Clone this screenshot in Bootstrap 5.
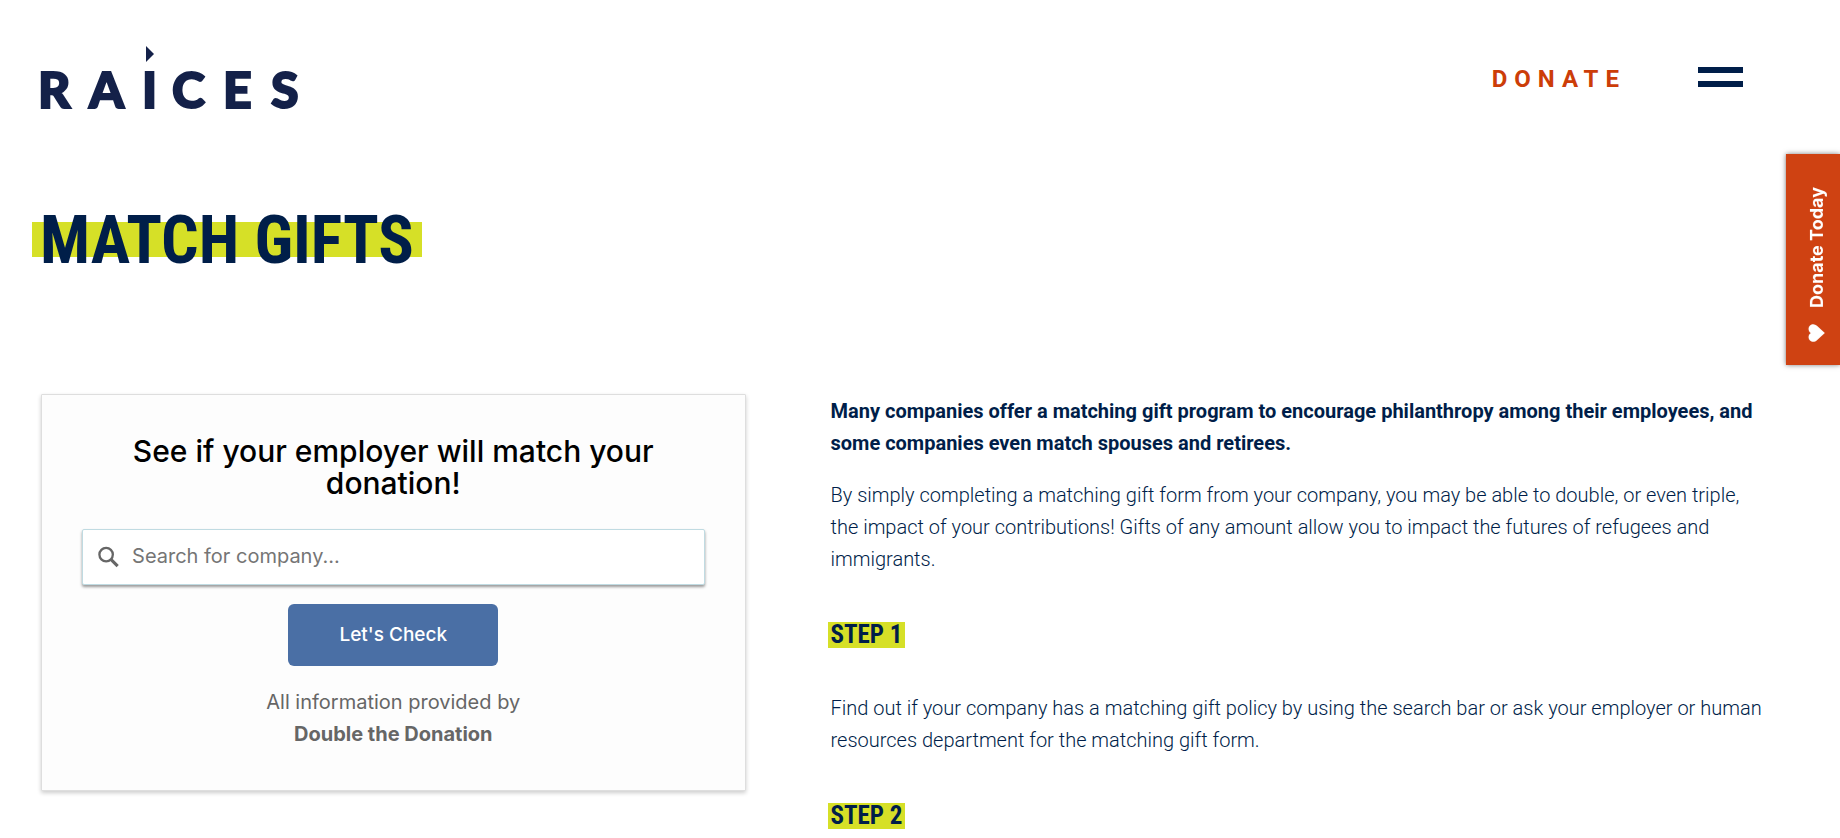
<!DOCTYPE html>
<html lang="en">
<head>
<meta charset="utf-8">
<meta name="viewport" content="width=device-width, initial-scale=1">
<title>Match Gifts | RAICES</title>
<link rel="stylesheet" href="https://cdn.jsdelivr.net/npm/bootstrap@5.3.0/dist/css/bootstrap.min.css">
<style>
  :root { --navy: #001e49; --orange: #cf4212; --lime: #d6e027; --page-pad: 41px; }
  body { color: var(--navy); font-family: Roboto, "Liberation Sans", sans-serif; font-size: 20px; line-height: 32px; overflow-x: hidden; }
  .page-pad { padding-left: var(--page-pad); padding-right: var(--page-pad); }
  .site-header { height: 154px; padding-right: 97px; }
  .brand-logo { width: 272px; height: 80px; margin: 18px 0 0 -6px; }
  .brand-logo text { font-family: Lato, sans-serif; font-weight: 900; font-size: 50px; fill: #142149; stroke: #142149; stroke-width: 2px; }
  .donate-link { color: #cc3d08; font-weight: 700; font-size: 24px; letter-spacing: 7px; text-decoration: none; padding-top: 4px; }
  .menu-btn { width: 45px; height: 20px; border-top: 6px solid var(--navy); border-bottom: 6px solid var(--navy); background: none; }
  .page-title { font-family: "Roboto Condensed", Roboto, sans-serif; font-weight: 700; font-size: 66px; line-height: 80px; padding-top: 47px; margin-bottom: 113px; }
  .page-title span { display: inline-block; margin-left: -9px; padding: 0 8px; background: linear-gradient(var(--lime), var(--lime)) 0 21px / 100% 35px no-repeat; }
  .page-columns { --bs-gutter-x: 48px; }
  .match-card { background: #fdfdfd; border: 1px solid #dedede; border-radius: 1px; box-shadow: 0 2px 4px rgba(0,0,0,.2); padding: 40px; font-family: Inter, "Liberation Sans", sans-serif; color: #666; }
  .match-card h2 { font-size: 30px; line-height: 32px; font-weight: 500; color: #000; margin-bottom: 30px; }
  .search-box { height: 56px; background: #fff; border: 1px solid #c0dbe2; border-radius: 2px; box-shadow: 0 2px 3px rgba(0,0,0,.4); padding-left: 14px; }
  .search-box input { color: #666; font-size: 20px; line-height: 30px; padding: 0 12px 2px; }
  .search-box input::placeholder { color: #757575; opacity: 1; }
  .check-btn { --bs-btn-bg: #4a6fa5; --bs-btn-color: #fff; --bs-btn-hover-bg: #3d5f90; --bs-btn-hover-color: #fff; width: 210px; height: 62px; font-size: 19px; font-weight: 500; border: 0; border-radius: 6px; margin: 19px 0 20px; }
  .match-card a { color: inherit; text-decoration: none; font-weight: 700; }
  .article { padding: 1px 34px 0 37px; }
  .article p { font-weight: 300; margin-bottom: 20px; }
  .article p.intro { font-weight: 700; }
  .step-title { font-family: "Roboto Condensed", Roboto, sans-serif; font-weight: 700; font-size: 25px; line-height: 26px; margin: 47px 0 44px; }
  .step-title span { display: inline-block; background: var(--lime); padding: 0 3px; margin-left: -3px; }
  .donate-tab { top: 154px; width: 54px; height: 211px; writing-mode: vertical-rl; transform: rotate(180deg); background: var(--orange); color: #fff; box-shadow: 0 0 5px rgba(0,0,0,.5); text-decoration: none; font-family: Inter, "Liberation Sans", sans-serif; font-weight: 700; font-size: 18px; gap: 16px; padding: 0 8px 9px 0; }
</style>
</head>
<body>
<header class="site-header page-pad d-flex align-items-center justify-content-between">
  <a href="#" aria-label="RAICES home">
    <svg class="brand-logo d-block" viewBox="-6 0 272 80" aria-hidden="true">
      <text y="62" x="-3 48 101 131 182 230">RAICES</text>
      <path d="M105 0L113 8L105 16Z" fill="#142149"/>
    </svg>
  </a>
  <nav class="d-flex align-items-center">
    <a class="donate-link me-5" href="#">DONATE</a>
    <button class="menu-btn border-start-0 border-end-0 p-0 ms-4" type="button" aria-label="Open menu"></button>
  </nav>
</header>

<main class="page-pad">
  <h1 class="page-title"><span>MATCH GIFTS</span></h1>
  <div class="row page-columns">
    <div class="col-lg-5">
      <form class="match-card text-center">
        <h2>See if your employer will match your donation!</h2>
        <div class="search-box d-flex align-items-center">
          <svg width="24" height="24" viewBox="0 0 24 24" fill="none" stroke="#666" aria-hidden="true"><circle cx="9.500" cy="9.500" r="7" stroke-width="2.400"/><path d="M14.500 14.500L21.500 21.500" stroke-width="3.200"/></svg>
          <input class="form-control border-0 bg-transparent shadow-none" type="text" placeholder="Search for company..." aria-label="Search for company">
        </div>
        <button class="btn check-btn" type="button">Let's Check</button>
        <div>All information provided by<br><a href="#">Double the Donation</a></div>
      </form>
    </div>
    <div class="col-lg-7">
      <article class="article">
        <p class="intro">Many companies offer a matching gift program to encourage philanthropy among their employees, and some companies even match spouses and retirees.</p>
        <p>By simply completing a matching gift form from your company, you may be able to double, or even triple, the impact of your contributions! Gifts of any amount allow you to impact the futures of refugees and immigrants.</p>
        <h3 class="step-title"><span>STEP 1</span></h3>
        <p>Find out if your company has a matching gift policy by using the search bar or ask your employer or human resources department for the matching gift form.</p>
        <h3 class="step-title mb-0"><span>STEP 2</span></h3>
      </article>
    </div>
  </div>
</main>

<a class="donate-tab position-fixed end-0 d-flex align-items-center justify-content-center" href="#">
  <svg width="18" height="18" viewBox="0 0 16 16" fill="#fff" aria-hidden="true"><path d="M1 8L8 14.500C11 17 15.500 15.500 15.500 11.500C15.500 10 14.500 8.500 13.500 8C14.500 7.500 15.500 6 15.500 4.500C15.500 0.500 11-1 8 1.500Z"/></svg>
  <span>Donate Today</span>
</a>
<script src="https://cdn.jsdelivr.net/npm/bootstrap@5.3.0/dist/js/bootstrap.bundle.min.js"></script>
</body>
</html>
